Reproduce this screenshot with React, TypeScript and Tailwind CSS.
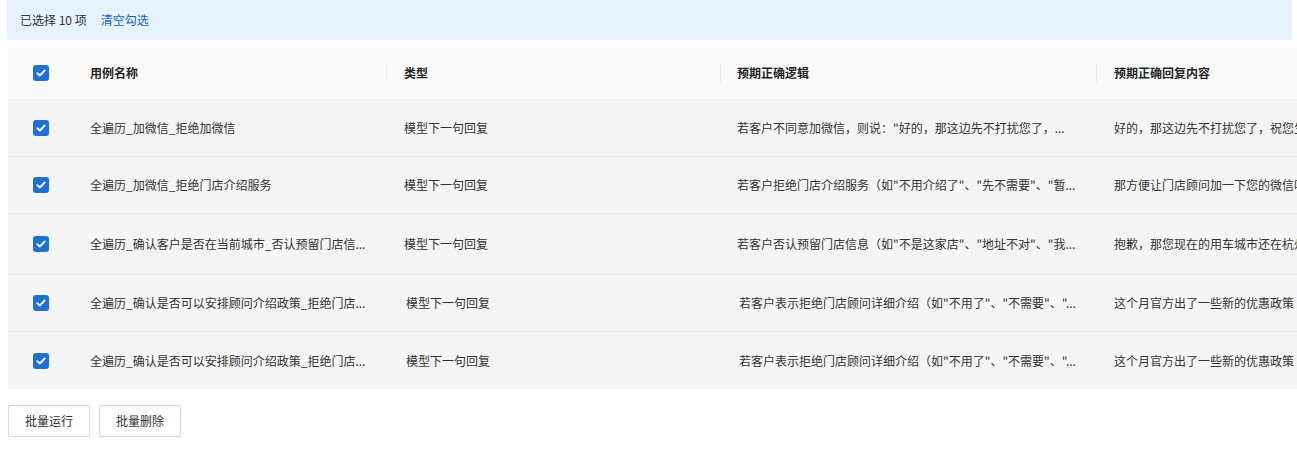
import React, { useState } from 'react';

type CaseRow = {
  id: number;
  name: string;
  type: string;
  logic: string;
  reply: string;
  height: string;
};

// long cells are already cut to what fits in the column
const rows: CaseRow[] = [
  {
    id: 1,
    name: '全遍历_加微信_拒绝加微信',
    type: '模型下一句回复',
    logic: '若客户不同意加微信，则说："好的，那这边先不打扰您了，...',
    reply: '好的，那这边先不打扰您了，祝您生活愉快',
    height: 'h-[57px]',
  },
  {
    id: 2,
    name: '全遍历_加微信_拒绝门店介绍服务',
    type: '模型下一句回复',
    logic: '若客户拒绝门店介绍服务（如"不用介绍了"、"先不需要"、"暂...',
    reply: '那方便让门店顾问加一下您的微信吗',
    height: 'h-[57px]',
  },
  {
    id: 3,
    name: '全遍历_确认客户是否在当前城市_否认预留门店信...',
    type: '模型下一句回复',
    logic: '若客户否认预留门店信息（如"不是这家店"、"地址不对"、"我...',
    reply: '抱歉，那您现在的用车城市还在杭州吗',
    height: 'h-[61px]',
  },
  {
    id: 4,
    name: '全遍历_确认是否可以安排顾问介绍政策_拒绝门店...',
    type: '模型下一句回复',
    logic: '若客户表示拒绝门店顾问详细介绍（如"不用了"、"不需要"、"...',
    reply: '这个月官方出了一些新的优惠政策',
    height: 'h-[57px]',
  },
  {
    id: 5,
    name: '全遍历_确认是否可以安排顾问介绍政策_拒绝门店...',
    type: '模型下一句回复',
    logic: '若客户表示拒绝门店顾问详细介绍（如"不用了"、"不需要"、"...',
    reply: '这个月官方出了一些新的优惠政策',
    height: 'h-[57px]',
  },
];

function Checkbox({ checked, onChange }: { checked: boolean; onChange: () => void }) {
  return (
    <button
      onClick={onChange}
      className={`w-4 h-4 rounded-[3px] flex items-center justify-center ${
        checked ? 'bg-[#1f6fd6]' : 'bg-white border border-[#d9d9d9]'
      }`}
    >
      {checked && (
        <svg width="10" height="8" viewBox="0 0 10 8" fill="none">
          <path d="M1.3 4.1 3.8 6.5 8.7 1.5" stroke="white" strokeWidth="1.8" strokeLinecap="round" strokeLinejoin="round" />
        </svg>
      )}
    </button>
  );
}

export default function App() {
  const [selected, setSelected] = useState<number[]>(rows.map(r => r.id));

  const toggle = (id: number) => {
    setSelected(prev => (prev.includes(id) ? prev.filter(x => x !== id) : [...prev, id]));
  };

  const allChecked = selected.length === rows.length;

  return (
    <div
      className="w-[1297px] h-[463px] overflow-hidden bg-white text-[12px] text-[#333]"
      style={{ fontFamily: '"Noto Sans CJK SC", "Liberation Sans", sans-serif' }}
    >
      {/* selection banner */}
      <div className="ml-[7px] w-[1285px] h-[40px] bg-[#e6f3ff] rounded-b-[4px] flex items-center pl-[13px]">
        <span className="text-[#333]">已选择 10 项</span>
        <button className="ml-[14px] text-[#1664c6]" onClick={() => setSelected([])}>
          清空勾选
        </button>
      </div>

      {/* table */}
      <div className="mt-[7px] ml-[8px] w-[1400px] overflow-hidden">
        <div className="flex h-[53px] items-center bg-[#fafafa] border-b border-[#efefef] font-semibold text-[#262626]">
          <div className="w-[66px] flex justify-center shrink-0">
            <Checkbox
              checked={allChecked}
              onChange={() => setSelected(allChecked ? [] : rows.map(r => r.id))}
            />
          </div>
          <div className="w-[313px] shrink-0 pl-[16px] flex items-center justify-between">
            <span>用例名称</span>
            <span className="w-px h-[20px] bg-[#ececec]" />
          </div>
          <div className="w-[334px] shrink-0 pl-[17px] flex items-center justify-between">
            <span>类型</span>
            <span className="w-px h-[20px] bg-[#ececec]" />
          </div>
          <div className="w-[376px] shrink-0 pl-[16px] flex items-center justify-between">
            <span>预期正确逻辑</span>
            <span className="w-px h-[20px] bg-[#ececec]" />
          </div>
          <div className="w-[300px] shrink-0 pl-[17px]">预期正确回复内容</div>
        </div>

        {rows.map((row, i) => (
          <div
            key={row.id}
            className={`flex items-center ${row.height} bg-[#f5f5f5] ${
              i < rows.length - 1 ? 'border-b border-[#ebebeb]' : ''
            }`}
          >
            <div className="w-[66px] flex justify-center shrink-0">
              <Checkbox checked={selected.includes(row.id)} onChange={() => toggle(row.id)} />
            </div>
            <div className="w-[313px] shrink-0 pl-[16px] whitespace-nowrap overflow-hidden">{row.name}</div>
            <div className={`w-[334px] shrink-0 ${i > 2 ? 'pl-[19px]' : 'pl-[17px]'} whitespace-nowrap`}>{row.type}</div>
            <div className={`w-[376px] shrink-0 ${i > 2 ? 'pl-[18px]' : 'pl-[16px]'} whitespace-nowrap overflow-hidden`}>{row.logic}</div>
            <div className="w-[300px] shrink-0 pl-[17px] whitespace-nowrap">{row.reply}</div>
          </div>
        ))}
      </div>

      {/* bulk actions */}
      <div className="mt-[16px] ml-[8px] flex gap-[9px]">
        <button className="w-[82px] h-[32px] border border-[#d9d9d9] rounded-[2px] bg-white text-[#333]">
          批量运行
        </button>
        <button className="w-[82px] h-[32px] border border-[#d9d9d9] rounded-[2px] bg-white text-[#333]">
          批量删除
        </button>
      </div>
    </div>
  );
}
